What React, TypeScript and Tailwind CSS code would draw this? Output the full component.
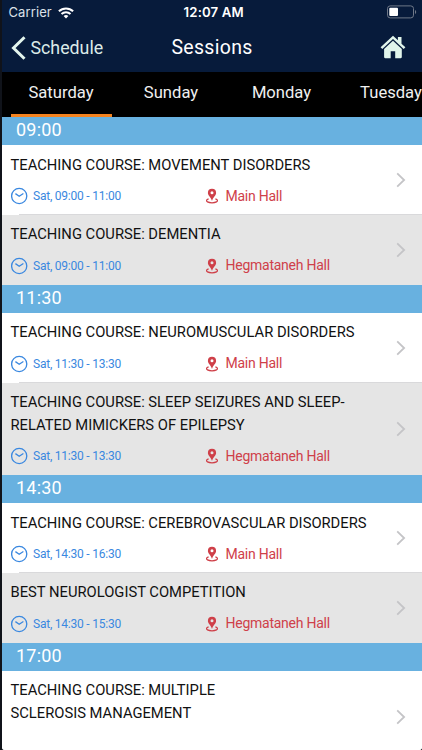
import clsx from "clsx";

type Session = {
  title: string[];
  time?: string;
  hall?: string;
};

type Slot = {
  start: string;
  sessions: Session[];
};

const DAYS = [
  { name: "Saturday", className: "w-[101px]" },
  { name: "Sunday", className: "w-[119px]" },
  { name: "Monday", className: "w-[102px]" },
  { name: "Tuesday", className: "w-[117px]" },
];

const SLOTS: Slot[] = [
  {
    start: "09:00",
    sessions: [
      { title: ["TEACHING COURSE: MOVEMENT DISORDERS"], time: "Sat, 09:00 - 11:00", hall: "Main Hall" },
      { title: ["TEACHING COURSE: DEMENTIA"], time: "Sat, 09:00 - 11:00", hall: "Hegmataneh Hall" },
    ],
  },
  {
    start: "11:30",
    sessions: [
      { title: ["TEACHING COURSE: NEUROMUSCULAR DISORDERS"], time: "Sat, 11:30 - 13:30", hall: "Main Hall" },
      {
        title: ["TEACHING COURSE: SLEEP SEIZURES AND SLEEP-", "RELATED MIMICKERS OF EPILEPSY"],
        time: "Sat, 11:30 - 13:30",
        hall: "Hegmataneh Hall",
      },
    ],
  },
  {
    start: "14:30",
    sessions: [
      { title: ["TEACHING COURSE: CEREBROVASCULAR DISORDERS"], time: "Sat, 14:30 - 16:30", hall: "Main Hall" },
      { title: ["BEST NEUROLOGIST COMPETITION"], time: "Sat, 14:30 - 15:30", hall: "Hegmataneh Hall" },
    ],
  },
  {
    start: "17:00",
    sessions: [{ title: ["TEACHING COURSE: MULTIPLE", "SCLEROSIS MANAGEMENT"] }],
  },
];

function WifiIcon() {
  return (
    <svg width="16" height="12" viewBox="0 0 16 12" fill="none" stroke="white" strokeWidth="2">
      <path d="M0.9 4.3a10.1 10.1 0 0 1 14.2 0" />
      <path d="M3.5 7a6.4 6.4 0 0 1 9 0" />
      <path d="M5.6 9.1a3.4 3.4 0 0 1 4.8 0L8 11.6z" fill="white" stroke="none" />
    </svg>
  );
}

function BatteryIcon() {
  return (
    <svg width="30" height="14" viewBox="0 0 30 14" fill="none">
      <rect x="0.5" y="0.9" width="26" height="12" rx="2.7" stroke="#6f7888" />
      <rect x="2.3" y="2.8" width="8.7" height="8.2" rx="1" fill="white" />
      <path d="M28 5c1.6.6 1.6 3.4 0 4z" fill="#6f7888" />
    </svg>
  );
}

function HomeIcon() {
  return (
    <svg width="26" height="24" viewBox="0 0 26 24" fill="#e1f5eb">
      <path d="M0.6 12.3 13 0.7l4.9 4.6V2h3.6v6.7l3.9 3.6-1.7 1.8L13 4.1 2.3 14.1z" />
      <path d="M13 5.8 4.1 14.1v8c0 .7.4 1.1 1.1 1.1h5.5v-7h4.5v7h5.5c.7 0 1.1-.4 1.1-1.1v-8z" />
    </svg>
  );
}

function ClockIcon() {
  return (
    <svg width="17" height="18" viewBox="0.8 0 17 18" fill="none" stroke="#3a88e0" strokeWidth="1.3">
      <circle cx="9" cy="9" r="7.6" />
      <path d="m5.2 6.6 3.8 2.6 4.2-2.7" />
    </svg>
  );
}

function PinIcon() {
  return (
    <svg width="12" height="16" viewBox="0 0 12 16" fill="#cf4049">
      <path
        fillRule="evenodd"
        d="M6 .8a4.1 4.1 0 0 0-4.1 4.1c0 2.7 3.2 4.1 4.1 8.1.9-4 4.1-5.4 4.1-8.1A4.1 4.1 0 0 0 6 .8zm0 2.5a1.5 1.5 0 1 1 0 3 1.5 1.5 0 0 1 0-3z"
      />
      <path
        d="M2.6 10.9C.2 11.6-.1 13 1.5 13.9c2.2 1.2 6.8 1.2 9 0 1.6-.9 1.3-2.3-1.1-3"
        fill="none"
        stroke="#cf4049"
        strokeWidth="1.3"
      />
    </svg>
  );
}

function StatusBar() {
  return (
    <div className="grid h-6 grid-cols-3 items-center pr-[5px] pl-[6.5px] font-['Inter',sans-serif] text-white">
      <div className="flex items-center gap-1.5 pt-px text-[13px] tracking-[0.1px] text-[#dce1e8]">
        <span>Carrier</span>
        <WifiIcon />
      </div>
      <span className="pt-px pl-0.5 text-center text-[13.2px] font-semibold tracking-[0.15px] whitespace-nowrap">
        12:07 AM
      </span>
      <div className="flex justify-end">
        <BatteryIcon />
      </div>
    </div>
  );
}

function NavBar() {
  return (
    <div className="grid h-12 grid-cols-3 items-center px-[9px]">
      <button className="flex items-center gap-[4.5px] text-[17.8px] text-[#dcebe8]">
        <svg width="15" height="24" viewBox="0 0 15 24" fill="none" stroke="#e3f5ed" strokeWidth="3">
          <path d="M13.5 1.2 2.5 12l11 10.8" />
        </svg>
        Schedule
      </button>
      <h1 className="text-center text-[19.5px] tracking-[0.3px] text-white">Sessions</h1>
      <button className="flex justify-end pr-[7px] pb-[3px]">
        <HomeIcon />
      </button>
    </div>
  );
}

function DayTabs() {
  return (
    <div className="flex h-[45px] shrink-0 bg-black pl-[8.5px] text-[16.6px] text-[#f0f0f0]">
      {DAYS.map((day, i) => (
        <button
          key={day.name}
          className={clsx(
            "shrink-0 border-b-[3px]",
            day.className,
            i === 0 ? "border-[#f5831f]" : "border-transparent"
          )}
        >
          {day.name}
        </button>
      ))}
    </div>
  );
}

function SessionRow({ session, shaded }: { session: Session; shaded: boolean }) {
  return (
    <div
      className={clsx(
        "relative flex shrink-0 items-center justify-between pr-4 pl-[8.5px]",
        session.title.length > 1 ? "h-[92.5px]" : "h-[69.75px]",
        shaded ? "bg-[#e5e5e5]" : "bg-white"
      )}
    >
      <div className="flex h-full flex-col pt-[8.4px]">
        <div className="text-[14.75px] leading-[22.5px] whitespace-nowrap text-[#111]">
          {session.title.map((line) => (
            <p key={line}>{line}</p>
          ))}
        </div>
        {session.time && (
          <div className="mt-2.5 flex h-5 items-center">
            <div className="flex w-[195px] items-center gap-[5.5px] text-[12px] tracking-[-0.22px] text-[#3a88e0]">
              <ClockIcon />
              <span>{session.time}</span>
            </div>
            <div className="flex items-center gap-2 text-[14px] tracking-[-0.25px] text-[#cf4049]">
              <PinIcon />
              <span>{session.hall}</span>
            </div>
          </div>
        )}
      </div>
      <svg width="10" height="16" viewBox="0 0 10 16" fill="none" stroke="#c4c4c7" strokeWidth="1.8">
        <path d="m1.2 1.4 6.9 6.6-6.9 6.6" />
      </svg>
      {!shaded && <div className="absolute right-0 bottom-0 left-[17px] h-px bg-[#d9d9db]" />}
    </div>
  );
}

export default function App() {
  return (
    <div className="h-[750px] w-[422px] overflow-hidden bg-[#10131a] pl-[2px] font-['Roboto',sans-serif]">
      <div className="flex h-full flex-col overflow-hidden rounded-b-[3px] bg-white">
        <header className="h-[72px] shrink-0 bg-[#071b3b]">
          <StatusBar />
          <NavBar />
        </header>
        <DayTabs />
        <main className="flex flex-col">
          {SLOTS.map((slot) => (
            <section key={slot.start}>
              <h2 className="h-[28.2px] bg-[#68b1e0] pl-3.5 text-[18px] leading-[26px] tracking-[0.2px] text-white">
                {slot.start}
              </h2>
              {slot.sessions.map((session, i) => (
                <SessionRow key={session.title[0]} session={session} shaded={i % 2 === 1} />
              ))}
            </section>
          ))}
        </main>
      </div>
    </div>
  );
}
